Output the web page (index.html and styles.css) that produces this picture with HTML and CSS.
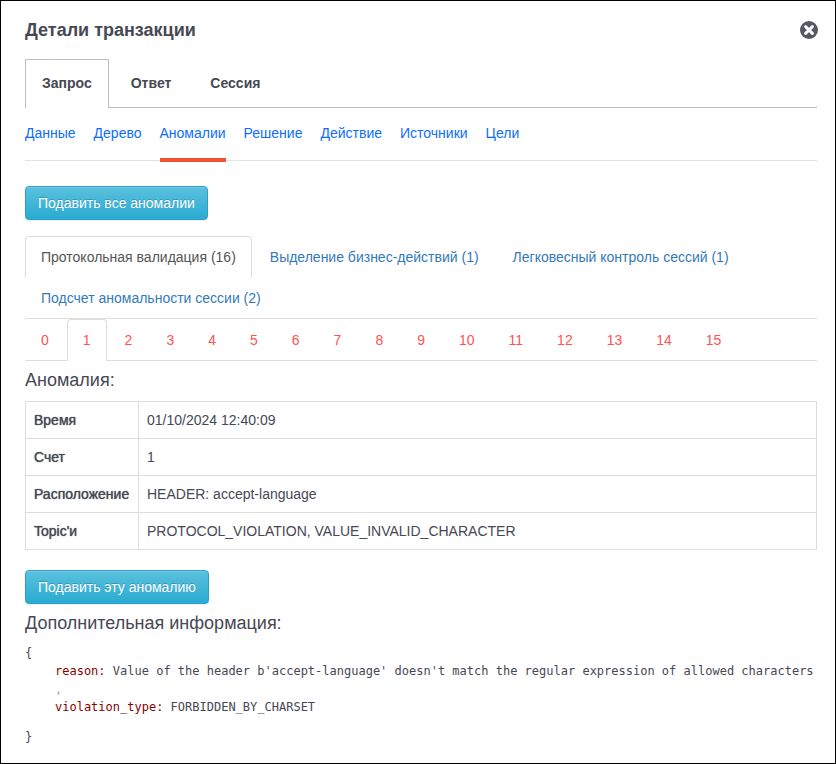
FILE: index.html
```
<!DOCTYPE html>
<html lang="ru">

<head>
    <meta charset="UTF-8">
    <meta name="viewport" content="width=device-width, initial-scale=1.0">
    <title>Детали транзакции</title>
    <link rel="stylesheet" href="styles.css">
</head>

<body>
    <main class="dialog">
        <header class="dialog-header">
            <h1>Детали транзакции</h1>
            <button type="button" class="close" aria-label="Закрыть">
                <svg viewBox="0 0 18 18" width="18" height="18">
                    <circle cx="9" cy="9" r="9" fill="#555966"/>
                    <path d="M5.6 5.6l6.8 6.8M12.4 5.6l-6.8 6.8" stroke="#fff" stroke-width="2.9" stroke-linecap="round"/>
                </svg>
            </button>
        </header>

        <ul class="main-tabs">
            <li><a href="#" class="active">Запрос</a></li>
            <li><a href="#">Ответ</a></li>
            <li><a href="#">Сессия</a></li>
        </ul>

        <ul class="sub-nav">
            <li><a href="#">Данные</a></li>
            <li><a href="#">Дерево</a></li>
            <li><a href="#" class="active">Аномалии</a></li>
            <li><a href="#">Решение</a></li>
            <li><a href="#">Действие</a></li>
            <li><a href="#">Источники</a></li>
            <li><a href="#">Цели</a></li>
        </ul>

        <button type="button" class="btn">Подавить все аномалии</button>

        <ul class="nav-tabs type-tabs">
            <li><a href="#" class="active">Протокольная валидация (16)</a></li>
            <li><a href="#">Выделение бизнес-действий (1)</a></li>
            <li><a href="#">Легковесный контроль сессий (1)</a></li>
            <li><a href="#">Подсчет аномальности сессии (2)</a></li>
        </ul>

        <ul class="nav-tabs number-tabs">
            <li><a href="#">0</a></li>
            <li><a href="#" class="active">1</a></li>
            <li><a href="#">2</a></li>
            <li><a href="#">3</a></li>
            <li><a href="#">4</a></li>
            <li><a href="#">5</a></li>
            <li><a href="#">6</a></li>
            <li><a href="#">7</a></li>
            <li><a href="#">8</a></li>
            <li><a href="#">9</a></li>
            <li><a href="#">10</a></li>
            <li><a href="#">11</a></li>
            <li><a href="#">12</a></li>
            <li><a href="#">13</a></li>
            <li><a href="#">14</a></li>
            <li><a href="#">15</a></li>
        </ul>

        <h2>Аномалия:</h2>
        <table>
            <tbody>
                <tr>
                    <th scope="row">Время</th>
                    <td>01/10/2024 12:40:09</td>
                </tr>
                <tr>
                    <th scope="row">Счет</th>
                    <td>1</td>
                </tr>
                <tr>
                    <th scope="row">Расположение</th>
                    <td>HEADER: accept-language</td>
                </tr>
                <tr>
                    <th scope="row">Topic'и</th>
                    <td>PROTOCOL_VIOLATION, VALUE_INVALID_CHARACTER</td>
                </tr>
            </tbody>
        </table>

        <button type="button" class="btn">Подавить эту аномалию</button>

        <h2>Дополнительная информация:</h2>
        <div class="json">
            <div>{</div>
            <div class="json-body">
                <div><span class="key">reason:</span> Value of the header b'accept-language' doesn't match the regular expression of allowed characters</div>
                <div class="comma">,</div>
                <div><span class="key">violation_type:</span> FORBIDDEN_BY_CHARSET</div>
            </div>
            <div>}</div>
        </div>
    </main>
</body>

</html>
```
FILE: styles.css
```
* {
    box-sizing: border-box;
}

body {
    margin: 0;
    font-family: "Liberation Sans", Arial, sans-serif;
    font-size: 14px;
    line-height: 20px;
    color: #464854;
    background-color: #fff;
}

ul {
    list-style-type: none;
    margin: 0;
    padding: 0;
    display: flex;
}

a {
    display: block;
    text-decoration: none;
}

.dialog {
    min-height: 100vh;
    padding: 17px 18px 16px 24px;
    border: 1px solid #000;
}

.dialog-header {
    display: flex;
    justify-content: space-between;
    align-items: center;
    margin-right: -1px;
    margin-bottom: 17px;
}

h1 {
    margin: 0;
    font-size: 18px;
    line-height: 24px;
}

.close {
    display: flex;
    padding: 0;
    border: 0;
    background: none;
    cursor: pointer;
}

/* Request / response / session */
.main-tabs {
    gap: 5px;
    border-bottom: 1px solid #bfbfbf;
}

.main-tabs a {
    padding: 13px 16px 14px;
    border: 1px solid transparent;
    border-bottom: 0;
    font-weight: bold;
    color: #464854;
}

.main-tabs .active {
    margin-bottom: -1px;
    padding-bottom: 15px;
    border-color: #bfbfbf;
    background-color: #fff;
}

.sub-nav {
    gap: 18px;
    margin-bottom: 25px;
    border-bottom: 1px solid #e2e2e2;
}

.sub-nav a {
    margin-bottom: -2px;
    padding: 15px 0;
    border-bottom: 4px solid transparent;
    color: #0d6efd;
}

.sub-nav .active {
    border-bottom-color: #f0532d;
}

.btn {
    display: block;
    padding: 6px 12px;
    border: 1px solid #28a1c5;
    border-radius: 4px;
    background-image: linear-gradient(#5bc0de, #2aabd2);
    box-shadow: inset 0 1px 0 rgba(255, 255, 255, 0.15), 0 1px 1px rgba(0, 0, 0, 0.08);
    color: #fff;
    font: inherit;
    text-shadow: 0 -1px 0 rgba(0, 0, 0, 0.2);
    cursor: pointer;
}

.nav-tabs {
    flex-wrap: wrap;
    column-gap: 2px;
    border-bottom: 1px solid #ddd;
}

.nav-tabs li {
    margin-bottom: -1px;
}

.nav-tabs a {
    padding: 10px 15px;
    border: 1px solid transparent;
    border-radius: 4px 4px 0 0;
}

.nav-tabs .active {
    border-color: #ddd;
    border-bottom-color: #fff;
    background-color: #fff;
}

.type-tabs {
    margin-top: 16px;
}

.type-tabs a {
    color: #337ab7;
}

.type-tabs .active {
    color: #555;
}

.number-tabs a {
    color: #ff5252;
}

h2 {
    margin: 8px 0 10px;
    font-size: 18px;
    font-weight: normal;
    line-height: 22px;
}

table {
    width: 100%;
    margin-bottom: 20px;
    border-collapse: collapse;
}

th,
td {
    padding: 8px;
    border: 1px solid #ddd;
    text-align: left;
}

th {
    width: 113px;
    font-weight: normal;
    text-shadow: 0 0 1px #464854;
}

.json {
    font-family: "DejaVu Sans Mono", Consolas, monospace;
    font-size: 12px;
    line-height: 18px;
}

.json-body {
    padding-left: 30px;
    margin-bottom: 12px;
}

.key {
    color: #8b0000;
}

.comma {
    color: #aaa;
}
```
